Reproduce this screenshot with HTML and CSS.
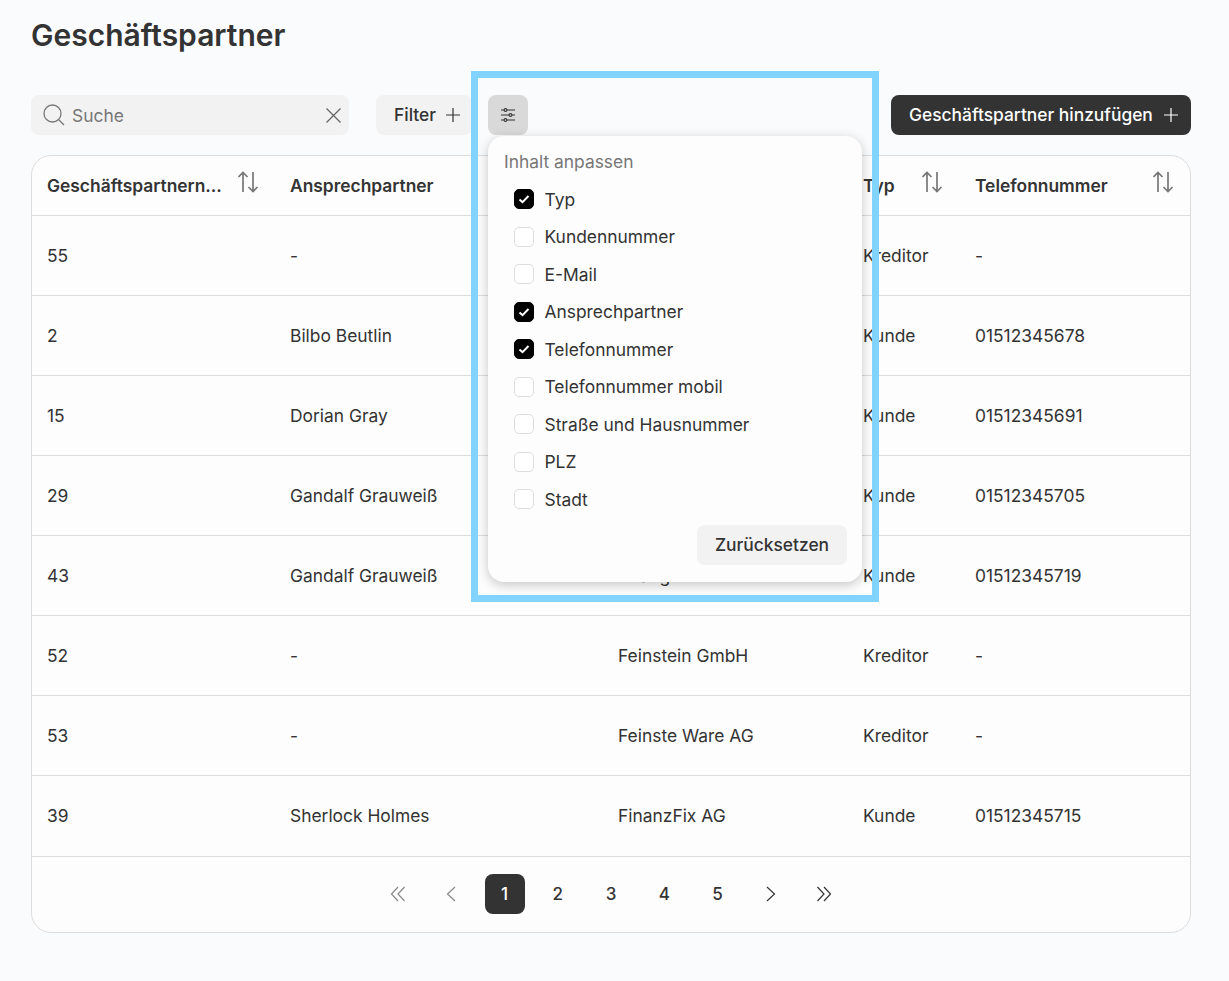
FILE: index.html
```html
<!DOCTYPE html>
<html lang="de">
<head>
<meta charset="utf-8">
<title>Geschäftspartner</title>
<link rel="stylesheet" href="styles.css">
</head>
<body>
<main class="page">
  <h1 class="title">Geschäftspartner</h1>
  <div class="toolbar">
    <div class="search">
      <svg class="search-icon" width="22" height="22" viewBox="0 0 22 22" fill="none" stroke="#777" stroke-width="1.3"><circle cx="9.500" cy="9.500" r="8.500"/><path d="M15.500 15.500l5.500 5.500"/></svg>
      <span class="search-text">Suche</span>
      <svg class="search-clear" width="18" height="18" viewBox="0 0 18 18" fill="none" stroke="#666" stroke-width="1.3"><path d="M2.500 2.500l14 14M16.500 2.500l-14 14"/></svg>
    </div>
    <button class="btn btn-light">Filter
      <svg width="16" height="16" viewBox="0 0 16 16" fill="none" stroke="#333" stroke-width="1.2"><path d="M8 1v14M1 8h14"/></svg>
    </button>
    <div class="settings-wrap">
      <button class="btn-icon">
        <svg width="18" height="18" viewBox="0 0 18 18" fill="none" stroke="#333" stroke-width="1.1"><path d="M2 4h3M8 4h8M2 9h8M13 9h3M2 14h3M8 14h8"/><circle cx="6.500" cy="4" r="1.400"/><circle cx="11.500" cy="9" r="1.400"/><circle cx="6.500" cy="14" r="1.400"/></svg>
      </button>
      <div class="popover">
        <div class="popover-title">Inhalt anpassen</div>
        <ul class="options">
          <li class="option"><span class="check on"><svg width="12" height="12" viewBox="0 0 12 12" fill="none" stroke="#fff" stroke-width="2"><path d="M1.500 6.500l3 2.700L10.500 3"/></svg></span>Typ</li>
          <li class="option"><span class="check"></span>Kundennummer</li>
          <li class="option"><span class="check"></span>E-Mail</li>
          <li class="option"><span class="check on"><svg width="12" height="12" viewBox="0 0 12 12" fill="none" stroke="#fff" stroke-width="2"><path d="M1.500 6.500l3 2.700L10.500 3"/></svg></span>Ansprechpartner</li>
          <li class="option"><span class="check on"><svg width="12" height="12" viewBox="0 0 12 12" fill="none" stroke="#fff" stroke-width="2"><path d="M1.500 6.500l3 2.700L10.500 3"/></svg></span>Telefonnummer</li>
          <li class="option"><span class="check"></span>Telefonnummer mobil</li>
          <li class="option"><span class="check"></span>Straße und Hausnummer</li>
          <li class="option"><span class="check"></span>PLZ</li>
          <li class="option"><span class="check"></span>Stadt</li>
        </ul>
        <div class="popover-foot"><button class="btn btn-light btn-reset">Zurücksetzen</button></div>
      </div>
    </div>
    <button class="btn btn-dark">Geschäftspartner hinzufügen
      <svg width="16" height="16" viewBox="0 0 16 16" fill="none" stroke="#fff" stroke-width="1.2"><path d="M8 1v14M1 8h14"/></svg>
    </button>
  </div>

  <section class="card">
    <table class="table">
      <colgroup><col class="c1"><col class="c2"><col class="c3"><col class="c4"><col class="c5"></colgroup>
      <thead>
        <tr>
          <th><div class="th"><span>Geschäftspartnern...</span><svg class="sort" width="22" height="24" viewBox="0 0 22 24" fill="none" stroke="#777" stroke-width="1.7"><path d="M5 22V2.500M.5 7L5 2.500 9.500 7M15 2v19.500M10.500 17L15 21.500 19.500 17"/></svg></div></th>
          <th><div class="th"><span>Ansprechpartner</span></div></th>
          <th><div class="th"><span>Name</span></div></th>
          <th><div class="th"><span>Typ</span><svg class="sort" width="22" height="24" viewBox="0 0 22 24" fill="none" stroke="#777" stroke-width="1.7"><path d="M5 22V2.500M.5 7L5 2.500 9.500 7M15 2v19.500M10.500 17L15 21.500 19.500 17"/></svg></div></th>
          <th><div class="th"><span>Telefonnummer</span><svg class="sort" width="22" height="24" viewBox="0 0 22 24" fill="none" stroke="#777" stroke-width="1.7"><path d="M5 22V2.500M.5 7L5 2.500 9.500 7M15 2v19.500M10.500 17L15 21.500 19.500 17"/></svg></div></th>
        </tr>
      </thead>
      <tbody>
        <tr><td>55</td><td>-</td><td>Eisenwerk AG</td><td>Kreditor</td><td>-</td></tr>
        <tr><td>2</td><td>Bilbo Beutlin</td><td>Beutlin GmbH</td><td>Kunde</td><td>01512345678</td></tr>
        <tr><td>15</td><td>Dorian Gray</td><td>Dorian GmbH</td><td>Kunde</td><td>01512345691</td></tr>
        <tr><td>29</td><td>Gandalf Grauweiß</td><td>Eisenhardt AG</td><td>Kunde</td><td>01512345705</td></tr>
        <tr><td>43</td><td>Gandalf Grauweiß</td><td>Erlangen GmbH</td><td>Kunde</td><td>01512345719</td></tr>
        <tr><td>52</td><td>-</td><td>Feinstein GmbH</td><td>Kreditor</td><td>-</td></tr>
        <tr><td>53</td><td>-</td><td>Feinste Ware AG</td><td>Kreditor</td><td>-</td></tr>
        <tr class="row-last"><td>39</td><td>Sherlock Holmes</td><td>FinanzFix AG</td><td>Kunde</td><td>01512345715</td></tr>
      </tbody>
    </table>
    <nav class="pager">
      <span class="pg"><svg width="18" height="18" viewBox="0 0 18 18" fill="none" stroke="#888" stroke-width="1.200"><path d="M9 2L2.500 9 9 16M15.500 2L9 9l6.500 7"/></svg></span>
      <span class="pg"><svg width="18" height="18" viewBox="0 0 18 18" fill="none" stroke="#888" stroke-width="1.200"><path d="M13 2L5.500 9l7.500 7"/></svg></span>
      <span class="pg pg-active">1</span>
      <span class="pg">2</span>
      <span class="pg">3</span>
      <span class="pg">4</span>
      <span class="pg">5</span>
      <span class="pg"><svg width="18" height="18" viewBox="0 0 18 18" fill="none" stroke="#333" stroke-width="1.200"><path d="M5 2l7.500 7-7.500 7"/></svg></span>
      <span class="pg"><svg width="18" height="18" viewBox="0 0 18 18" fill="none" stroke="#333" stroke-width="1.200"><path d="M2.500 2L9 9l-6.500 7M9 2l6.500 7L9 16"/></svg></span>
    </nav>
  </section>
  <div class="highlight"></div>
</main>
</body>
</html>
```
FILE: styles.css
```css
* { box-sizing: border-box; }
html, body { margin: 0; height: 100%; }
body {
  background: #fafbfd;
  color: #333;
  font-family: Inter, "Liberation Sans", sans-serif;
  font-size: 17.4px;
}
.page { position: relative; height: 981px; padding: 14px 38px 0 31px; overflow: hidden; }
.title { margin: 0; font-size: 30px; line-height: 42px; font-weight: 600; color: #333; }
.toolbar { display: flex; align-items: flex-start; margin-top: 39px; height: 40px; }
.search {
  display: flex; align-items: center; width: 318px; height: 40px;
  padding: 0 7px 0 12px; background: #f2f2f2; border-radius: 8px;
}
.search-icon { flex: none; }
.search-text { flex: 1; margin-left: 7px; color: #777; }
.search-clear { flex: none; }
.btn {
  display: inline-flex; align-items: center; gap: 10px; height: 40px; padding: 0 12px 2px 18px;
  border: 0; border-radius: 8px; font: 500 17.4px Inter, "Liberation Sans", sans-serif; color: #333;
}
.btn svg { position: relative; top: 1px; flex: none; }
.btn-light { background: #f2f2f2; margin-left: 27px; width: 96px; gap: 9px; white-space: nowrap; }
.btn-dark { background: #333; color: #fff; margin-left: auto; width: 300px; white-space: nowrap; }
.btn-icon {
  display: flex; align-items: center; justify-content: center; width: 40px; height: 40px;
  padding: 0; border: 0; border-radius: 8px; background: #d9d9d9;
}
.settings-wrap { position: relative; margin-left: 16px; }
.popover {
  position: absolute; z-index: 5; left: 0; top: 41px; width: 374px; height: 445.6px;
  padding: 15px 15px 15px 16px; background: #fdfdfd; border-radius: 16px;
  box-shadow: 0 3px 12px rgba(0,0,0,.22);
}
.popover-title { line-height: 22px; color: #777; }
.options { list-style: none; margin: 7.3px 0 0; padding: 0 0 0 10px; display: grid; grid-auto-rows: 37.5px; }
.option { display: flex; align-items: center; gap: 10.5px; color: #333; }
.check {
  display: flex; align-items: center; justify-content: center; width: 20px; height: 20px;
  border: 1px solid #ddd; border-radius: 5px; background: #fff;
}
.check.on { background: #000; border-color: #000; }
.popover-foot { display: flex; justify-content: flex-end; margin-top: 7.7px; }
.btn-reset { margin: 0; width: 150px; padding: 0 0 2px; justify-content: center; }
.card {
  margin-top: 20px; height: 778px; background: #fdfdfd; border: 1px solid #ddd; border-radius: 20px; overflow: hidden;
}
.table { width: 100%; border-collapse: collapse; table-layout: fixed; }
.c1 { width: 242px; } .c2 { width: 328px; } .c3 { width: 245px; } .c4 { width: 112px; }
.table th { height: 59px; padding: 0 16px; text-align: left; font-weight: 600; border-bottom: 1px solid #ddd; }
.table th:first-child { padding: 0 15px; }
.th { display: flex; align-items: center; justify-content: space-between; height: 58px; }
.sort { position: relative; top: -3px; flex: none; margin-right: -1px; }
.table td { height: 80px; padding: 0 16px; border-bottom: 1px solid #ddd; }
.table td:first-child { padding-left: 15px; }
.row-last td { height: 81px; }
.pager { display: flex; justify-content: center; gap: 13.25px; padding-top: 17px; }
.pg { display: flex; align-items: center; justify-content: center; width: 40px; height: 40px; border-radius: 8px; font-weight: 500; font-size: 17px; }
.pg-active { background: #333; color: #fff; }
.highlight {
  position: absolute; z-index: 10; left: 471px; top: 71px; width: 408px; height: 531px;
  border: 7px solid #80d4ff; pointer-events: none;
}
```
